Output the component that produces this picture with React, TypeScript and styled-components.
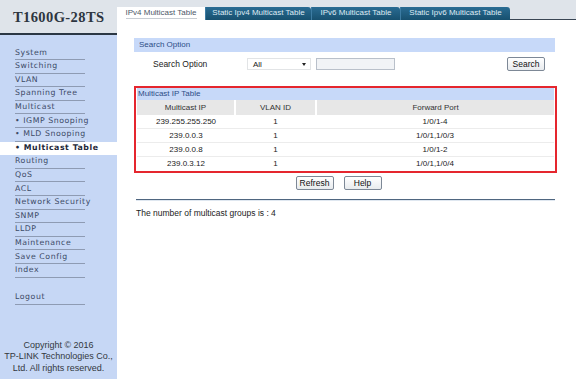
import React from 'react';
import styled, { createGlobalStyle } from 'styled-components';

const GlobalStyle = createGlobalStyle`
  html, body {
    margin: 0;
    padding: 0;
    background: #ffffff;
  }
  body {
    font-family: 'Liberation Sans', Arial, sans-serif;
  }
`;

const menu = [
  { label: 'System' },
  { label: 'Switching' },
  { label: 'VLAN' },
  { label: 'Spanning Tree' },
  { label: 'Multicast' },
  { label: 'IGMP Snooping', sub: true },
  { label: 'MLD Snooping', sub: true },
  { label: 'Multicast Table', sub: true, active: true },
  { label: 'Routing' },
  { label: 'QoS' },
  { label: 'ACL' },
  { label: 'Network Security' },
  { label: 'SNMP' },
  { label: 'LLDP' },
  { label: 'Maintenance' },
  { label: 'Save Config' },
  { label: 'Index' },
];

const tabs = [
  { label: 'IPv4 Multicast Table', w: 88 },
  { label: 'Static Ipv4 Multicast Table', w: 106 },
  { label: 'IPv6 Multicast Table', w: 89 },
  { label: 'Static Ipv6 Multicast Table', w: 110 },
];

const rows = [
  { ip: '239.255.255.250', vlan: '1', port: '1/0/1-4' },
  { ip: '239.0.0.3', vlan: '1', port: '1/0/1,1/0/3' },
  { ip: '239.0.0.8', vlan: '1', port: '1/0/1-2' },
  { ip: '239.0.3.12', vlan: '1', port: '1/0/1,1/0/4' },
];

const App = () => {
  return (
    <Page>
      <GlobalStyle />
      <Sidebar>
        <Brand>T1600G-28TS</Brand>
        <Nav>
          {menu.map((m) => (
            <NavItem key={m.label} $active={m.active}>
              <NavLabel $active={m.active}>
                {m.sub ? '\u2022 ' : ''}
                {m.label}
              </NavLabel>
            </NavItem>
          ))}
          <NavGap />
          <NavItem>
            <NavLabel>Logout</NavLabel>
          </NavItem>
        </Nav>
        <Copyright>
          Copyright © 2016
          <br />
          TP-LINK Technologies Co.,
          <br />
          Ltd. All rights reserved.
        </Copyright>
      </Sidebar>
      <Main>
        <TabBar>
          {tabs.map((t, i) => (
            <Tab key={t.label} $active={i === 0} $w={t.w}>
              <TabText $active={i === 0}>{t.label}</TabText>
            </Tab>
          ))}
          <TabFiller />
        </TabBar>
        <Content>
          <SectionBar>Search Option</SectionBar>
          <SearchRow>
            <SearchLabel>Search Option</SearchLabel>
            <Select>
              <span>All</span>
              <Arrow />
            </Select>
            <TextInput />
            <Spacer />
            <Button $w={38}>Search</Button>
          </SearchRow>
          <TableBox>
            <TableTitle>Multicast IP Table</TableTitle>
            <Table>
              <thead>
                <tr>
                  <Th style={{ width: 97 }}>Multicast IP</Th>
                  <Th style={{ width: 79 }}>VLAN ID</Th>
                  <Th>Forward Port</Th>
                </tr>
              </thead>
              <tbody>
                {rows.map((r) => (
                  <tr key={r.ip}>
                    <Td>{r.ip}</Td>
                    <Td>{r.vlan}</Td>
                    <Td>{r.port}</Td>
                  </tr>
                ))}
              </tbody>
            </Table>
          </TableBox>
          <ButtonRow>
            <Button $w={38}>Refresh</Button>
            <Button $w={38}>Help</Button>
          </ButtonRow>
          <Divider />
          <Summary>The number of multicast groups is : 4</Summary>
        </Content>
      </Main>
    </Page>
  );
};

export default App;

const Page = styled.div`
  display: flex;
  width: 576px;
  height: 379px;
  overflow: hidden;
`;

const Sidebar = styled.div`
  width: 117px;
  flex-shrink: 0;
  display: flex;
  flex-direction: column;
  background: #c6d7f5;
`;

const Brand = styled.div`
  height: 35px;
  box-sizing: border-box;
  padding: 9px 0 0 13px;
  background: #dfe4ea;
  border-bottom: 2px solid #2b3744;
  font-family: 'Liberation Serif', 'Times New Roman', serif;
  font-weight: bold;
  font-size: 14.5px;
  letter-spacing: 0.4px;
  white-space: nowrap;
  color: #2d3540;
`;

const Nav = styled.div`
  display: flex;
  flex-direction: column;
  padding-top: 11.5px;
`;

const NavItem = styled.div<{ $active?: boolean }>`
  height: 13.6px;
  box-sizing: border-box;
  padding-left: 15px;
  background: ${(p) => (p.$active ? '#ffffff' : 'transparent')};
  display: flex;
  align-items: flex-end;
`;

const NavLabel = styled.div<{ $active?: boolean }>`
  width: 70px;
  height: 12.5px;
  white-space: nowrap;
  font-family: 'DejaVu Sans', Verdana, sans-serif;
  font-size: 7.8px;
  line-height: 11px;
  letter-spacing: 0.55px;
  font-weight: ${(p) => (p.$active ? 'bold' : 'normal')};
  color: ${(p) => (p.$active ? '#1e2838' : '#3c4a66')};
  border-bottom: 1px solid ${(p) => (p.$active ? 'transparent' : '#8e9bb3')};
`;

const NavGap = styled.div`
  height: 13.6px;
`;

const Copyright = styled.div`
  margin-top: auto;
  padding-bottom: 5px;
  text-align: center;
  font-size: 9px;
  line-height: 11.5px;
  color: #333840;
`;

const Main = styled.div`
  flex: 1;
  display: flex;
  flex-direction: column;
`;

const TabBar = styled.div`
  height: 20px;
  display: flex;
  align-items: flex-end;
  background: #dfe4ea;
`;

const Tab = styled.div<{ $active?: boolean; $w: number }>`
  width: ${(p) => p.$w}px;
  height: 13px;
  box-sizing: border-box;
  flex-shrink: 0;
  display: flex;
  align-items: center;
  justify-content: center;
  background: ${(p) =>
    p.$active ? '#ffffff' : 'linear-gradient(#2a6c93, #17506f)'};
  border-left: ${(p) => (p.$active ? 'none' : '1px solid #3d7ca3')};
  border-top-right-radius: ${(p) => (p.$active ? '0' : '3px')};
`;

const TabText = styled.span<{ $active?: boolean }>`
  font-size: 8px;
  white-space: nowrap;
  color: ${(p) => (p.$active ? '#4c5868' : '#dfeaf3')};
  border-bottom: 1px solid ${(p) => (p.$active ? '#c8cdd3' : 'transparent')};
  line-height: 10px;
`;

const TabFiller = styled.div`
  flex: 1;
  height: 100%;
  border-bottom: 1px solid #3a4654;
`;

const Content = styled.div`
  padding: 18px 21px 0 17px;
  display: flex;
  flex-direction: column;
`;

const SectionBar = styled.div`
  height: 14px;
  line-height: 14px;
  padding-left: 5px;
  background: #c7d9f9;
  color: #2d4d86;
  font-size: 8px;
`;

const SearchRow = styled.div`
  display: flex;
  align-items: center;
  height: 20px;
  margin-top: 2px;
  padding-right: 10px;
`;

const SearchLabel = styled.div`
  width: 94px;
  padding-left: 19px;
  font-size: 8.5px;
  color: #222;
`;

const Select = styled.div`
  width: 64px;
  height: 12px;
  box-sizing: border-box;
  border: 1px solid #e2e4e6;
  background: #fff;
  display: flex;
  align-items: center;
  justify-content: space-between;
  padding: 0 4px 0 5px;
  font-size: 8px;
  color: #222;
`;

const Arrow = styled.span`
  width: 0;
  height: 0;
  border-left: 2.5px solid transparent;
  border-right: 2.5px solid transparent;
  border-top: 3px solid #222;
`;

const TextInput = styled.div`
  width: 79px;
  height: 12px;
  box-sizing: border-box;
  margin-left: 5px;
  border: 1px solid #b9c0ca;
  background: #f1f3f6;
`;

const Spacer = styled.div`
  flex: 1;
`;

const Button = styled.div<{ $w: number }>`
  width: ${(p) => p.$w}px;
  height: 14px;
  box-sizing: border-box;
  border: 1px solid #7d8896;
  border-radius: 2px;
  background: linear-gradient(#ffffff, #e8ebee);
  font-size: 8.5px;
  line-height: 12px;
  text-align: center;
  color: #111;
`;

const TableBox = styled.div`
  margin-top: 12px;
  margin-right: -2px;
  border: 2px solid #e5262e;
  padding: 0 1px 1px 1px;
`;

const TableTitle = styled.div`
  height: 12px;
  line-height: 12px;
  padding-left: 1px;
  background: #c7d9f9;
  color: #2d4d86;
  font-size: 8px;
`;

const Table = styled.table`
  width: 100%;
  border-collapse: collapse;
  font-size: 8px;
  color: #222;
`;

const Th = styled.th`
  height: 15px;
  padding: 0;
  font-weight: normal;
  background: #e7e7e7;
  color: #333;
  border-left: 2px solid #ffffff;
  &:first-child {
    border-left: none;
  }
`;

const Td = styled.td`
  height: 13px;
  padding: 0;
  text-align: center;
  border-bottom: 1px solid #ececec;
  tr:last-child > & {
    border-bottom: none;
  }
`;

const ButtonRow = styled.div`
  display: flex;
  justify-content: center;
  gap: 10px;
  margin-top: 3px;
  padding-right: 12px;
`;

const Divider = styled.div`
  margin-top: 9px;
  margin-left: 2px;
  height: 1px;
  background: #4f6680;
  border-bottom: 1px solid #dfe7f0;
`;

const Summary = styled.div`
  margin-top: 7px;
  margin-left: 2px;
  font-size: 8.5px;
  color: #222;
`;
